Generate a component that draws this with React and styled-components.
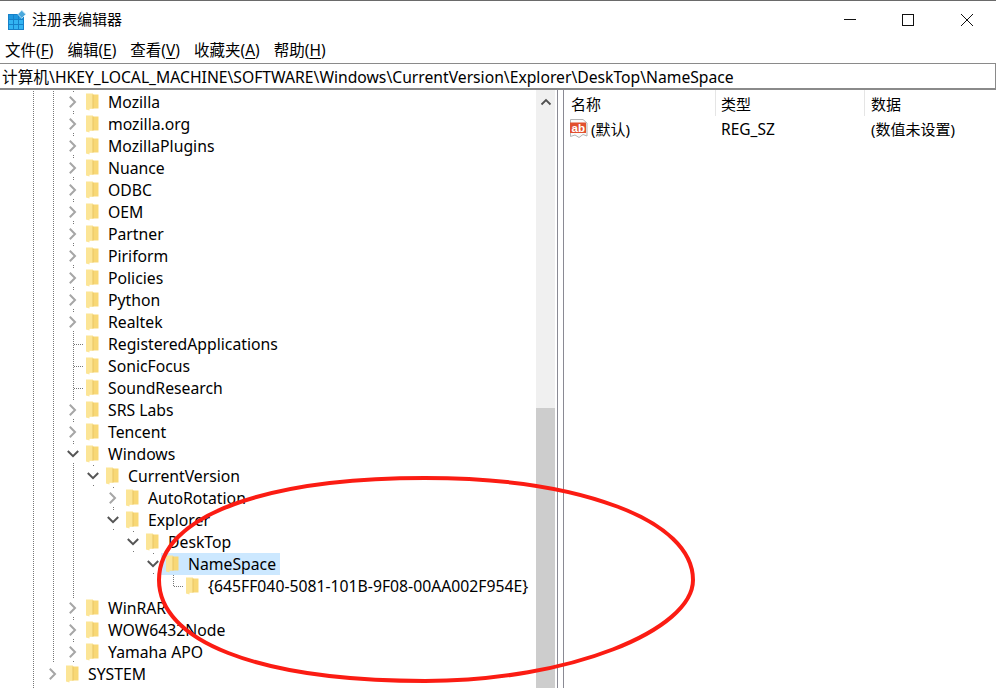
import React from "react";
import styled, { createGlobalStyle } from "styled-components";

const FONT = '"Noto Sans", "Noto Sans CJK SC", sans-serif';

const GlobalStyle = createGlobalStyle`
  html, body { margin: 0; padding: 0; background: #fff; }
  body { font-family: ${FONT}; color: #000; }
`;

const Window = styled.div`
  position: relative;
  width: 996px;
  height: 688px;
  overflow: hidden;
  background: #fff;
  border-top: 1px solid #6a6a6a;
  box-sizing: border-box;
  display: flex;
  flex-direction: column;
  font-size: 15.75px;
`;

const TitleBar = styled.div`
  height: 37px;
  display: flex;
  align-items: center;
  padding-left: 7px;
  flex-shrink: 0;
`;

const TitleText = styled.div`
  margin-left: 6px;
  flex: 1;
  font-size: 15px;
  margin-top: -2px;
`;

const WinButton = styled.div`
  width: 58.5px;
  height: 37px;
  display: flex;
  align-items: center;
  justify-content: center;
`;

const MenuBar = styled.div`
  height: 25px;
  display: flex;
  align-items: center;
  padding: 0 0 2px 5px;
  box-sizing: border-box;
  gap: 14px;
  flex-shrink: 0;
`;

const MenuItem = styled.span`
  white-space: nowrap;
  font-size: 15.5px;
  u { text-underline-offset: 2px; }
`;

const AddressBar = styled.div`
  height: 27px;
  box-sizing: border-box;
  border-top: 1px solid #8a8a8a;
  border-bottom: 2px solid #8a8a8a;
  border-right: 1px solid #8a8a8a;
  display: flex;
  align-items: center;
  padding-left: 2px;
  white-space: nowrap;
  flex-shrink: 0;
  font-size: 15.7px;
`;

const Main = styled.div`
  flex: 1;
  display: flex;
  min-height: 0;
`;

const TreePane = styled.div`
  width: 557px;
  display: flex;
  flex-shrink: 0;
`;

const Tree = styled.div`
  flex: 1;
  padding: 1px 0 0 23px;
  overflow: hidden;
`;

const Row = styled.div`
  height: 22px;
  display: flex;
  align-items: stretch;
`;

const Cell = styled.div`
  position: relative;
  width: 20px;
  flex-shrink: 0;
  display: flex;
  align-items: center;
  justify-content: center;
  background-image: ${(p) =>
    p.$line
      ? "repeating-linear-gradient(to bottom, #777 0 1px, transparent 1px 2px)"
      : "none"};
  background-repeat: no-repeat;
  background-position: 10px 0;
  background-size: 1px ${(p) => (p.$half ? "11px" : "100%")};
`;

const Elbow = styled.span`
  position: absolute;
  left: 11px;
  top: 11px;
  width: 9px;
  border-top: 1px dotted #777;
`;

const ChevronBox = styled.span`
  display: flex;
  align-items: center;
  justify-content: center;
  width: 14px;
  height: 18px;
  background: #fff;
`;

const Node = styled.div`
  display: flex;
  align-items: center;
  margin-left: -2px;
  padding: 0 4px 0 5px;
  background: ${(p) => (p.$selected ? "#cce8ff" : "transparent")};
  white-space: nowrap;
`;

const NodeLabel = styled.span`
  margin-left: 10px;
  margin-top: -1px;
`;

const Scrollbar = styled.div`
  width: 19px;
  margin-right: 2px;
  background: #f0f0f0;
  display: flex;
  flex-direction: column;
  flex-shrink: 0;
`;

const ScrollUp = styled.div`
  height: 24px;
  display: flex;
  align-items: center;
  justify-content: center;
`;

const ScrollGap = styled.div`
  height: ${(p) => p.$height}px;
`;

const ScrollThumb = styled.div`
  flex: 1;
  background: #cdcdcd;
`;

const Splitter = styled.div`
  width: 7px;
  box-sizing: border-box;
  border-left: 1px solid #8a8a94;
  border-right: 1px solid #8a8a94;
  flex-shrink: 0;
`;

const List = styled.div`
  flex: 1;
  display: flex;
  flex-direction: column;
`;

const ListHeader = styled.div`
  display: flex;
  height: 26px;
  flex-shrink: 0;
`;

const HeaderCell = styled.div`
  width: ${(p) => p.$width}px;
  box-sizing: border-box;
  padding: 1px 0 0 ${(p) => p.$pad}px;
  border-right: ${(p) => (p.$last ? "none" : "1px solid #e5e5e5")};
  font-size: 15px;
  display: flex;
  align-items: center;
  flex-shrink: 0;
`;

const ListRow = styled.div`
  display: flex;
  height: 26px;
  align-items: center;
`;

const ListCell = styled.div`
  width: ${(p) => p.$width}px;
  box-sizing: border-box;
  padding-left: ${(p) => p.$pad}px;
  display: flex;
  align-items: center;
  flex-shrink: 0;
  white-space: nowrap;
  font-size: 15px;
`;

const CellText = styled.span`
  font-size: ${(p) => p.$size || 15}px;
  margin-top: -1px;
`;

const IconSpot = styled.span`
  display: flex;
  margin-right: 3px;
`;

const EllipseLayer = styled.svg`
  position: absolute;
  left: 0;
  top: -1px;
  pointer-events: none;
`;

const rows = [
  { name: "Mozilla", d: 2, s: "closed" },
  { name: "mozilla.org", d: 2, s: "closed" },
  { name: "MozillaPlugins", d: 2, s: "closed" },
  { name: "Nuance", d: 2, s: "closed" },
  { name: "ODBC", d: 2, s: "closed" },
  { name: "OEM", d: 2, s: "closed" },
  { name: "Partner", d: 2, s: "closed" },
  { name: "Piriform", d: 2, s: "closed" },
  { name: "Policies", d: 2, s: "closed" },
  { name: "Python", d: 2, s: "closed" },
  { name: "Realtek", d: 2, s: "closed" },
  { name: "RegisteredApplications", d: 2, s: "leaf" },
  { name: "SonicFocus", d: 2, s: "leaf" },
  { name: "SoundResearch", d: 2, s: "leaf" },
  { name: "SRS Labs", d: 2, s: "closed" },
  { name: "Tencent", d: 2, s: "closed" },
  { name: "Windows", d: 2, s: "open" },
  { name: "CurrentVersion", d: 3, s: "open" },
  { name: "AutoRotation", d: 4, s: "closed" },
  { name: "Explorer", d: 4, s: "open" },
  { name: "DeskTop", d: 5, s: "open" },
  { name: "NameSpace", d: 6, s: "open", selected: true },
  { name: "{645FF040-5081-101B-9F08-00AA002F954E}", d: 7, s: "end" },
  { name: "WinRAR", d: 2, s: "closed" },
  { name: "WOW6432Node", d: 2, s: "closed" },
  { name: "Yamaha APO", d: 2, s: "closed" },
  { name: "SYSTEM", d: 1, s: "closed" },
];

const Chevron = ({ open }) => (
  <svg width="12" height="12" viewBox="0 0 12 12" fill="none">
    <path
      d={open ? "M0.8 3 L6 8.2 L11.2 3" : "M2.8 0.8 L8 6 L2.8 11.2"}
      stroke={open ? "#555" : "#a6a6a6"}
      strokeWidth="2"
    />
  </svg>
);

const Folder = () => (
  <svg width="13" height="18" viewBox="0 0 13 18" style={{ flexShrink: 0, marginRight: -1 }}>
    <path d="M3 1.5 H12.5 V15.5 H3 Z" fill="#f8d876" />
    <path d="M0 0.5 L7 0.5 V15.5 H3.5 V17.5 L0 16.5 Z" fill="#fce596" />
    <path d="M7 1.5 V15.5" stroke="#e9c462" strokeWidth="1" />
  </svg>
);

const AppIcon = () => (
  <svg width="19" height="20" viewBox="0 0 19 20">
    <rect x="1" y="4" width="16" height="16" fill="#1681c9" />
    {[0, 1, 2].map((r) =>
      [0, 1, 2].map((c) => (
        <rect
          key={r + "-" + c}
          x={2 + c * 5}
          y={5 + r * 5}
          width="4"
          height="4"
          fill={r === 0 ? "#1f97de" : "#32b4f2"}
        />
      ))
    )}
    <rect x="12" y="1.5" width="5.6" height="5.6" fill="#4aa8dc" stroke="#d6ecf8" strokeWidth="0.8" transform="rotate(45 14.8 4.3)" />
  </svg>
);

const StringIcon = () => (
  <svg width="19" height="20" viewBox="0 0 19 20">
    <path d="M1.5 0.5 H14 L18 4 V17 L14 15.5 L10 18.5 L6 16 L1.5 17.5 Z" fill="#fafafa" stroke="#b4b4b4" />
    <path d="M1 3.5 H17 V14 H1 Z" fill="#e2502f" />
    <text x="2.5" y="12.5" fontSize="11.5" fontWeight="700" fill="#fff" fontFamily="Liberation Sans, sans-serif">ab</text>
  </svg>
);

// which dotted guide columns each tree row carries
const hasGuide = (row, index, col) => {
  if (col === 0) return true;
  if (col === 1) return row.d >= 2;
  if (col === 2) return index > 16 && index < 23;
  return false;
};

const TreeRow = ({ row, index }) => {
  const cols = [];
  for (let c = 0; c < row.d; c++) {
    cols.push(<Cell key={c} $line={hasGuide(row, index, c)} />);
  }
  const toggle = row.s === "closed" || row.s === "open";
  return (
    <Row>
      {cols}
      <Cell $line={row.d !== 1} $half={row.s === "end"}>
        {toggle && (
          <ChevronBox>
            <Chevron open={row.s === "open"} />
          </ChevronBox>
        )}
        {!toggle && <Elbow />}
      </Cell>
      <Node $selected={row.selected}>
        <Folder />
        <NodeLabel>{row.name}</NodeLabel>
      </Node>
    </Row>
  );
};

const Accel = ({ label, k }) => (
  <MenuItem>
    {label}(<u>{k}</u>)
  </MenuItem>
);

export default function App() {
  return (
    <>
      <GlobalStyle />
      <Window>
        <TitleBar>
          <AppIcon />
          <TitleText>注册表编辑器</TitleText>
          <WinButton>
            <svg width="14" height="14" viewBox="0 0 14 14">
              <path d="M1 6.5 H13" stroke="#111" strokeWidth="1" />
            </svg>
          </WinButton>
          <WinButton>
            <svg width="14" height="14" viewBox="0 0 14 14">
              <rect x="1.5" y="1.5" width="11" height="11" fill="none" stroke="#111" />
            </svg>
          </WinButton>
          <WinButton>
            <svg width="14" height="14" viewBox="0 0 14 14">
              <path d="M1 1 L13 13 M13 1 L1 13" stroke="#111" strokeWidth="1" />
            </svg>
          </WinButton>
        </TitleBar>
        <MenuBar>
          <Accel label="文件" k="F" />
          <Accel label="编辑" k="E" />
          <Accel label="查看" k="V" />
          <Accel label="收藏夹" k="A" />
          <Accel label="帮助" k="H" />
        </MenuBar>
        <AddressBar>
          计算机\HKEY_LOCAL_MACHINE\SOFTWARE\Windows\CurrentVersion\Explorer\DeskTop\NameSpace
        </AddressBar>
        <Main>
          <TreePane>
            <Tree>
              {rows.map((row, i) => (
                <TreeRow key={row.name} row={row} index={i} />
              ))}
              <Row>
                <Cell $line />
              </Row>
            </Tree>
            <Scrollbar>
              <ScrollUp>
                <svg width="12" height="10" viewBox="0 0 12 10">
                  <path d="M1.5 7.5 L6 3 L10.5 7.5" fill="none" stroke="#505050" strokeWidth="1.8" />
                </svg>
              </ScrollUp>
              <ScrollGap $height={294} />
              <ScrollThumb />
            </Scrollbar>
          </TreePane>
          <Splitter />
          <List>
            <ListHeader>
              <HeaderCell $width={152} $pad={7}>名称</HeaderCell>
              <HeaderCell $width={149} $pad={5}>类型</HeaderCell>
              <HeaderCell $width={131} $pad={6} $last>数据</HeaderCell>
            </ListHeader>
            <ListRow>
              <ListCell $width={152} $pad={5}>
                <IconSpot>
                  <StringIcon />
                </IconSpot>
                <CellText>(默认)</CellText>
              </ListCell>
              <ListCell $width={149} $pad={5}>
                <CellText $size={15.5}>REG_SZ</CellText>
              </ListCell>
              <ListCell $width={131} $pad={6}>
                <CellText>(数值未设置)</CellText>
              </ListCell>
            </ListRow>
          </List>
        </Main>
        <EllipseLayer width="996" height="688" viewBox="0 0 996 688">
          <path
            d="M693 580 C693 520 580 478 425 478 C270 478 159 514 159 580 C159 640 255 681 425 681 C570 681 693 630 693 580 Z"
            fill="none"
            stroke="#fb1c13"
            strokeWidth="4"
          />
        </EllipseLayer>
      </Window>
    </>
  );
}
